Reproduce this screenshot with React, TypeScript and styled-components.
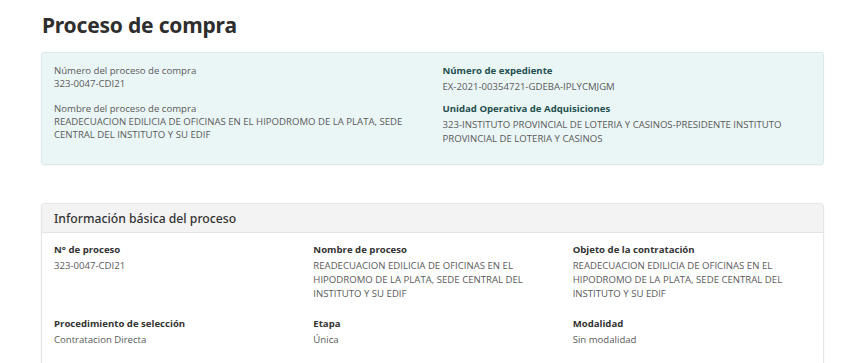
import React from 'react';
import styled, { createGlobalStyle } from 'styled-components';

const GlobalStyle = createGlobalStyle`
  body {
    margin: 0;
    background: #ffffff;
    font-family: 'Open Sans', 'Liberation Sans', sans-serif;
    color: #555555;
  }
`;

const Page = styled.main`
  width: 783px;
  padding: 10px 0 0 41px;
`;

const Title = styled.h1`
  margin: 0 0 12px 1px;
  font-family: 'Noto Sans', 'Open Sans', sans-serif;
  font-size: 21px;
  font-weight: 700;
  color: #2e2e2e;
  letter-spacing: -0.2px;
  line-height: 30px;
`;

const SummaryBox = styled.section`
  display: grid;
  grid-template-columns: 1fr 1fr;
  column-gap: 20px;
  padding: 11px 12px 18px;
  background: #eaf5f6;
  border: 1px solid #dce9ea;
  border-radius: 3px;
  box-shadow: 0 1px 2px rgba(0, 0, 0, 0.04);
`;

const Column = styled.div<{ $gap: number }>`
  display: flex;
  flex-direction: column;
  gap: ${({ $gap }) => $gap}px;
`;

const Field = styled.div`
  font-size: 9.6px;
  line-height: 13px;
`;

const SummaryLabel = styled.div<{ $strong?: boolean }>`
  color: ${({ $strong }) => ($strong ? '#23504e' : '#5a5a5a')};
  font-weight: ${({ $strong }) => ($strong ? 700 : 400)};
  margin-bottom: ${({ $strong }) => ($strong ? '3px' : '0')};
`;

const SummaryValue = styled.div<{ $loose?: boolean }>`
  color: #5a5a5a;
  line-height: ${({ $loose }) => ($loose ? '14px' : '13px')};
`;

const Card = styled.section`
  margin-top: 38px;
  border: 1px solid #e6e6e6;
  border-radius: 3px;
  box-shadow: 0 1px 3px rgba(0, 0, 0, 0.05);
  overflow: hidden;
`;

const CardHeader = styled.header`
  background: #f3f3f3;
  border-bottom: 1px solid #e4e4e4;
  padding: 0 12px;
  height: 28px;
  display: flex;
  align-items: center;
  font-family: 'Noto Sans', 'Open Sans', sans-serif;
  font-size: 12.2px;
  font-weight: 500;
  color: #333333;
`;

const CardBody = styled.div`
  display: grid;
  grid-template-columns: repeat(3, 1fr);
  column-gap: 21px;
  row-gap: 16px;
  padding: 10px 12px 20px;
`;

const Item = styled.div`
  font-size: 9.6px;
`;

const ItemLabel = styled.div`
  font-weight: 700;
  color: #333333;
  line-height: 13px;
  margin-bottom: 3px;
`;

const ItemValue = styled.div`
  color: #5a5a5a;
  line-height: 14px;
  padding-right: 20px;
`;

const longName =
  'READECUACION EDILICIA DE OFICINAS EN EL HIPODROMO DE LA PLATA, SEDE CENTRAL DEL INSTITUTO Y SU EDIF';

const basics = [
  { label: 'N° de proceso', value: '323-0047-CDI21' },
  { label: 'Nombre de proceso', value: longName },
  { label: 'Objeto de la contratación', value: longName },
  { label: 'Procedimiento de selección', value: 'Contratacion Directa' },
  { label: 'Etapa', value: 'Única' },
  { label: 'Modalidad', value: 'Sin modalidad' },
];

export default function App() {
  return (
    <Page>
      <GlobalStyle />
      <Title>Proceso de compra</Title>
      <SummaryBox>
        <Column $gap={12}>
          <Field>
            <SummaryLabel>Número del proceso de compra</SummaryLabel>
            <SummaryValue>323-0047-CDI21</SummaryValue>
          </Field>
          <Field>
            <SummaryLabel>Nombre del proceso de compra</SummaryLabel>
            <SummaryValue>{longName}</SummaryValue>
          </Field>
        </Column>
        <Column $gap={8}>
          <Field>
            <SummaryLabel $strong>Número de expediente</SummaryLabel>
            <SummaryValue $loose>EX-2021-00354721-GDEBA-IPLYCMJGM</SummaryValue>
          </Field>
          <Field>
            <SummaryLabel $strong>Unidad Operativa de Adquisiciones</SummaryLabel>
            <SummaryValue $loose>
              323-INSTITUTO PROVINCIAL DE LOTERIA Y CASINOS-PRESIDENTE INSTITUTO PROVINCIAL DE LOTERIA Y CASINOS
            </SummaryValue>
          </Field>
        </Column>
      </SummaryBox>
      <Card>
        <CardHeader>Información básica del proceso</CardHeader>
        <CardBody>
          {basics.map((b) => (
            <Item key={b.label}>
              <ItemLabel>{b.label}</ItemLabel>
              <ItemValue>{b.value}</ItemValue>
            </Item>
          ))}
        </CardBody>
      </Card>
    </Page>
  );
}
